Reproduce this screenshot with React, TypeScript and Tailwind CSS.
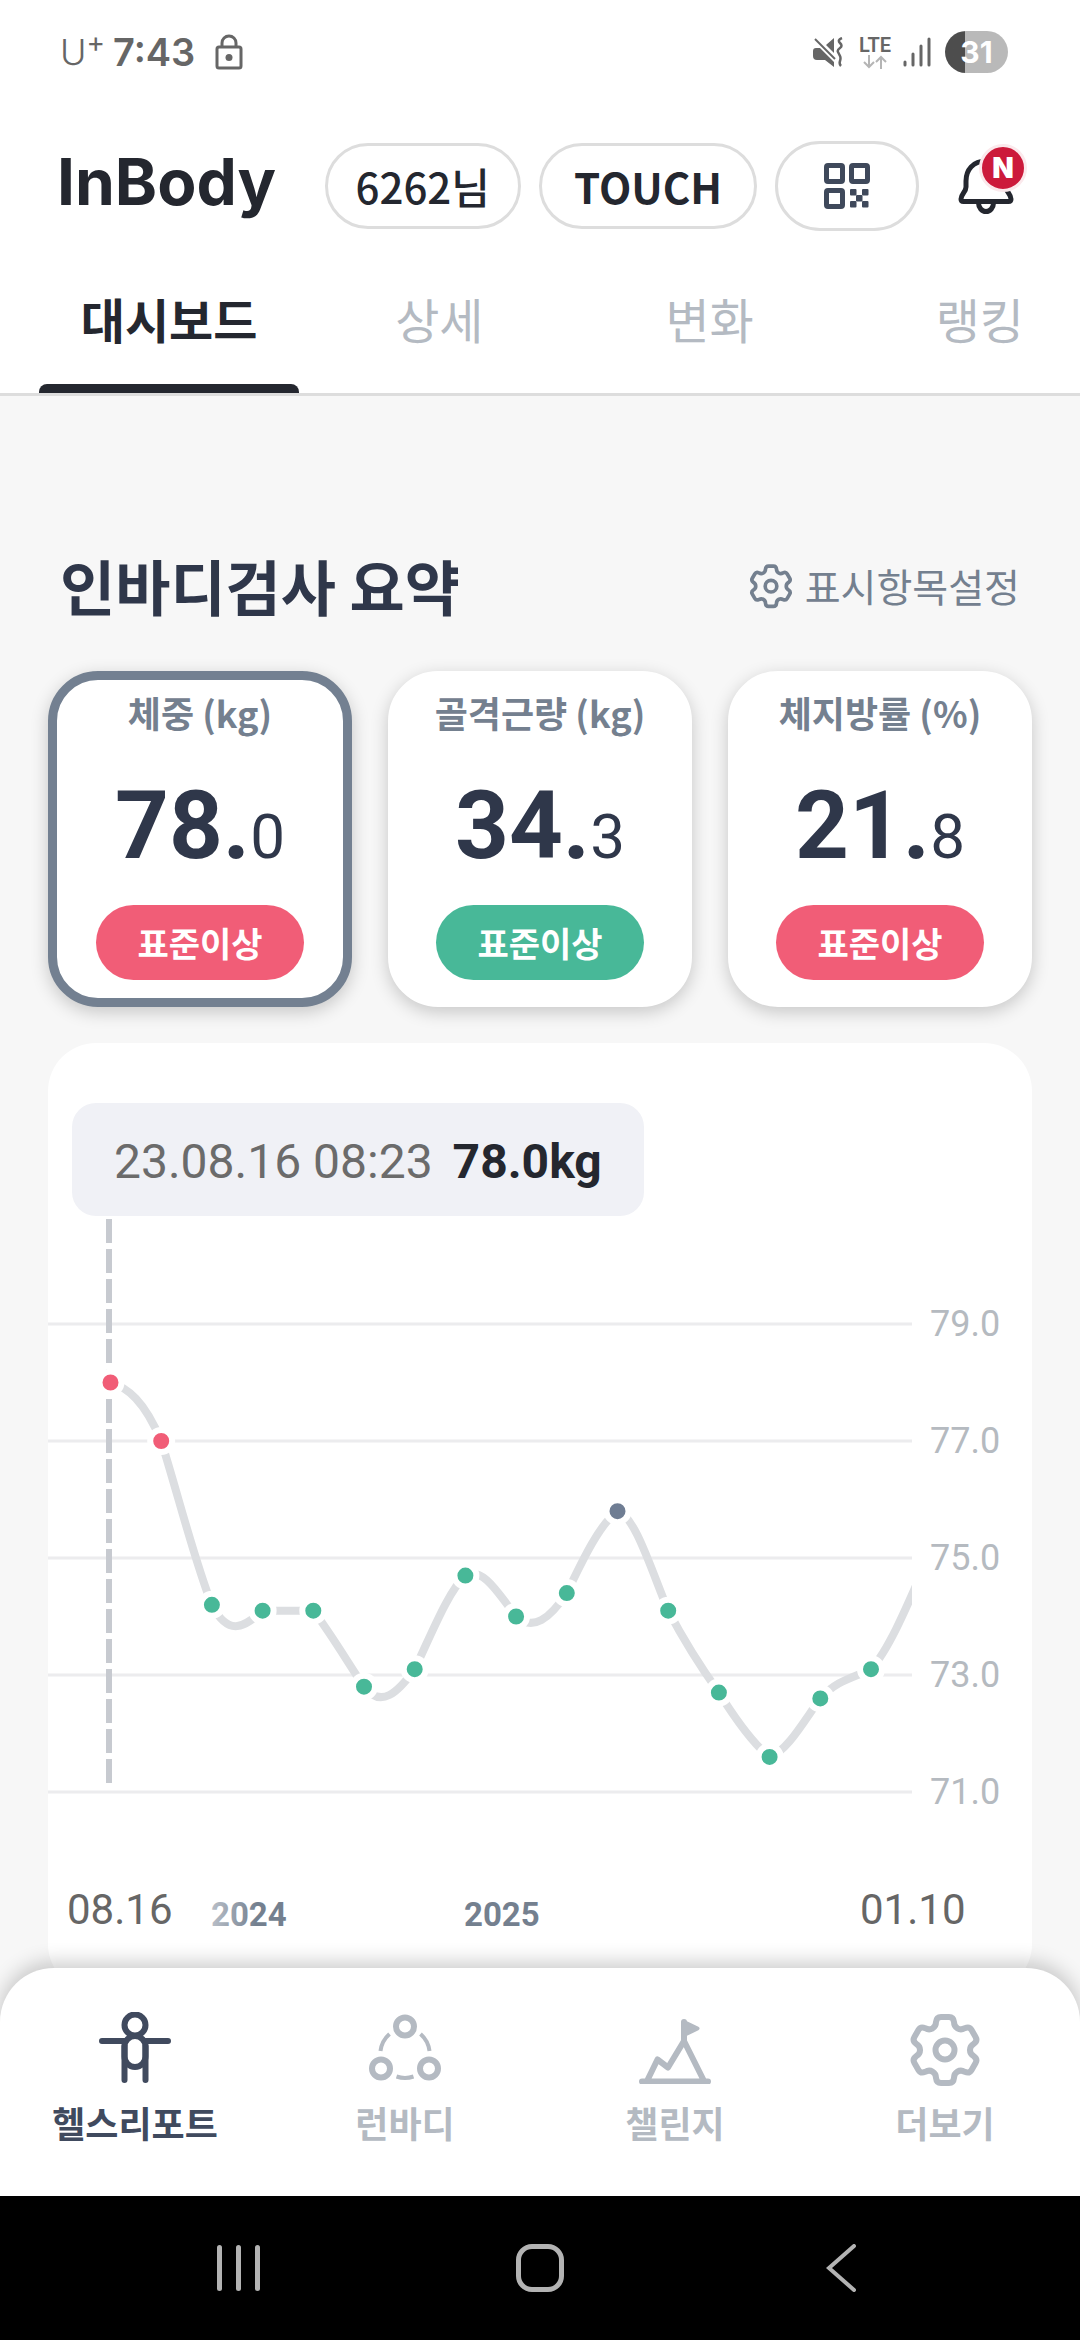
import { useState } from "react";
import clsx from "clsx";

type Metric = {
	id: string;
	label: string;
	whole: string;
	decimal: string;
	status: string;
	level: "over" | "good";
};

type Measurement = {
	value: number;
	color: string;
	// slope of the curve where it arrives at and leaves the point
	enter: number;
	leave: number;
};

const RED = "#f15d77";
const GREEN = "#48b898";
const SLATE = "#6f7d93";

const tabs = ["대시보드", "상세", "변화", "랭킹"];

const metrics: Metric[] = [
	{ id: "weight", label: "체중 (kg)", whole: "78.", decimal: "0", status: "표준이상", level: "over" },
	{ id: "muscle", label: "골격근량 (kg)", whole: "34.", decimal: "3", status: "표준이상", level: "good" },
	{ id: "fat", label: "체지방률 (%)", whole: "21.", decimal: "8", status: "표준이상", level: "over" },
];

const history: Measurement[] = [
	{ value: 78.0, color: RED, enter: 0, leave: 0.3 },
	{ value: 77.0, color: RED, enter: 2.4, leave: 3.2 },
	{ value: 74.2, color: GREEN, enter: 2.5, leave: 2 },
	{ value: 74.1, color: GREEN, enter: -0.9, leave: 0 },
	{ value: 74.1, color: GREEN, enter: 0, leave: 1.3 },
	{ value: 72.8, color: GREEN, enter: 1.5, leave: 1.3 },
	{ value: 73.1, color: GREEN, enter: -1.4, leave: -2.1 },
	{ value: 74.7, color: GREEN, enter: -0.9, leave: -0.6 },
	{ value: 74.0, color: GREEN, enter: 1.3, leave: 0.9 },
	{ value: 74.4, color: GREEN, enter: -1.5, leave: -2.1 },
	{ value: 75.8, color: SLATE, enter: -0.7, leave: 0.2 },
	{ value: 74.1, color: GREEN, enter: 2.4, leave: 1.9 },
	{ value: 72.7, color: GREEN, enter: 1.4, leave: 1.6 },
	{ value: 71.6, color: GREEN, enter: 0.8, leave: -0.3 },
	{ value: 72.6, color: GREEN, enter: -1.4, leave: -1.1 },
	{ value: 73.1, color: GREEN, enter: -0.5, leave: -1.1 },
	{ value: 74.75, color: GREEN, enter: -2.3, leave: 0 },
];

const gridValues = [79, 77, 75, 73, 71];

const PLOT_WIDTH = 864;
const STEP = 50.7;

const toX = (index: number) => 62.5 + index * STEP;
const toY = (value: number) => 108 + (79 - value) * 58.5;

const buildCurve = (data: Measurement[]) => {
	const handle = STEP / 3;
	let d = `M${toX(0)} ${toY(data[0].value)}`;
	for (let i = 1; i < data.length; i++) {
		const x0 = toX(i - 1);
		const y0 = toY(data[i - 1].value);
		const x1 = toX(i);
		const y1 = toY(data[i].value);
		d += ` C${x0 + handle} ${y0 + handle * data[i - 1].leave}`;
		d += ` ${x1 - handle} ${y1 - handle * data[i].enter} ${x1} ${y1}`;
	}
	return d;
};

// one tooth of the gear, repeated six times around the center
const buildGear = () => {
	const spin = (x: number, y: number, k: number) => {
		const a = (k * Math.PI) / 3;
		const px = x * Math.cos(a) + y * Math.sin(a);
		const py = x * Math.sin(a) - y * Math.cos(a);
		return `${px.toFixed(2)} ${py.toFixed(2)}`;
	};
	let d = `M${spin(-12.5, 21.6, 0)}`;
	for (let k = 0; k < 6; k++) {
		d += ` C${spin(-9.9, 23.1, k)} ${spin(-9, 25.5, k)} ${spin(-9, 28, k)}`;
		d += ` Q${spin(-8.5, 33, k)} ${spin(-4, 33, k)} L${spin(4, 33, k)}`;
		d += ` Q${spin(8.5, 33, k)} ${spin(9, 28, k)}`;
		d += ` C${spin(9, 25.5, k)} ${spin(9.9, 23.1, k)} ${spin(12.5, 21.6, k)}`;
	}
	return d + "Z";
};

const GearIcon = ({ className }: { className: string }) => (
	<svg viewBox="-36 -38 72 72" className={clsx("overflow-visible", className)} fill="none" stroke="currentColor" strokeWidth="6" aria-hidden="true">
		<path d={buildGear()} strokeLinejoin="round" />
		<circle r="9.5" />
	</svg>
);

const PersonIcon = () => (
	<svg viewBox="0 0 72 72" className="size-[72px]" fill="none" stroke="currentColor" strokeWidth="6" strokeLinecap="round" aria-hidden="true">
		<circle cx="36" cy="13" r="10.5" />
		<rect x="25.5" y="24" width="21" height="31" rx="10.5" />
		<path d="M3 29h23M46 29h23M25.5 34v34M46.5 34v34" />
	</svg>
);

const GroupIcon = () => (
	<svg viewBox="0 0 72 72" className="size-[72px]" fill="none" stroke="currentColor" aria-hidden="true">
		<g strokeWidth="6">
			<circle cx="36" cy="14.5" r="9" />
			<circle cx="12" cy="56.5" r="9" />
			<circle cx="60" cy="56.5" r="9" />
		</g>
		<path d="M20.5 22A27 27 0 0 0 11.5 39M51.5 22A27 27 0 0 1 60.5 39M27.5 64.5A27 27 0 0 0 44.5 64.5" strokeWidth="4" />
	</svg>
);

const MountainIcon = () => (
	<svg viewBox="0 0 72 72" className="size-[72px]" fill="none" stroke="currentColor" strokeWidth="6" strokeLinecap="round" strokeLinejoin="round" aria-hidden="true">
		<path d="M3 69.5h66M9 67l9.5-19.5L29 55.5L45 29l19 38M45 29V10" />
		<path d="M45 10l13.5 6.500L45 23z" fill="currentColor" strokeWidth="4" />
	</svg>
);

const QrIcon = () => (
	<svg viewBox="0 0 46 46" className="size-[46px]" fill="none" stroke="#3f495b" strokeWidth="5" aria-hidden="true">
		<rect x="2.5" y="2.5" width="16" height="16" rx="1.5" />
		<rect x="27.5" y="2.5" width="16" height="16" rx="1.5" />
		<rect x="2.5" y="27.5" width="16" height="16" rx="1.5" />
		<g fill="#3f495b" stroke="none">
			<rect x="26" y="26" width="6.5" height="6.5" rx="1" />
			<rect x="38" y="26" width="6.5" height="6.5" rx="1" />
			<rect x="32" y="32" width="6.5" height="6.5" rx="1" />
			<rect x="26" y="38" width="6.5" height="6.5" rx="1" />
			<rect x="38" y="38" width="6.5" height="6.5" rx="1" />
		</g>
	</svg>
);

const BellIcon = () => (
	<svg viewBox="0 0 58 60" className="h-[60px] w-[58px]" fill="none" stroke="#24272f" strokeWidth="5" strokeLinejoin="round" aria-hidden="true">
		<path d="M29 5C16 5 9 14 9 25v6c0 5-5 7-5 12 0 1.500 1 2.500 2.500 2.500h45c1.500 0 2.500-1 2.500-2.500 0-5-5-7-5-12v-6C49 14 42 5 29 5z" />
		<path d="M21.500 47a7.500 8.500 0 0 0 15 0" />
	</svg>
);

const StatusBar = () => (
	<div className="flex h-[104px] items-center justify-between pl-[60px] pr-[72px] text-[#666]">
		<div className="flex items-center">
			<span className="font-[Inter] text-[36px] font-light leading-none">U</span>
			<span className="mb-5 font-[Inter] text-[28px] leading-none">+</span>
			<span className="ml-2 font-[Inter] text-[38px] font-semibold leading-none">7:43</span>
			<svg viewBox="0 0 28 36" className="ml-5 h-9 w-7" fill="none" stroke="currentColor" strokeWidth="3" aria-hidden="true">
				<rect x="2" y="13" width="24" height="21" rx="2" />
				<path d="M7 13V9a7 7 0 0 1 14 0v4" />
				<circle cx="14" cy="23.500" r="3.500" fill="currentColor" stroke="none" />
			</svg>
		</div>
		<div className="flex items-center">
			<svg viewBox="0 0 30 30" className="size-[30px]" aria-hidden="true">
				<path d="M0 14q0-3 3-3h4l14 14v5l-9-7H4q-4 0-4-4zM13 8l8-7v15z" fill="currentColor" />
				<path d="M2 2l20 20" stroke="currentColor" strokeWidth="2" />
				<path d="M29 1q-5 2-2 5t0 5-2 4 2 4 0 5 1 5" fill="none" stroke="currentColor" strokeWidth="2.500" />
			</svg>
			<div className="ml-4 flex flex-col items-center">
				<span className="font-[Roboto] text-[20px] font-semibold leading-none">LTE</span>
				<svg viewBox="0 0 24 14" className="h-[14px] w-6" fill="none" stroke="#b5b5b5" strokeWidth="2" aria-hidden="true">
					<path d="M6 0v12M1 7l5 5 5-5M18 14V2M13 7l5-5 5 5" />
				</svg>
			</div>
			<svg viewBox="0 0 28 30" className="ml-3 h-[30px] w-7" stroke="currentColor" strokeWidth="3" strokeLinecap="round" aria-hidden="true">
				<path d="M2 25v3M10 17v11M18 9v19M26 2v26" />
			</svg>
			<div className="ml-[14px] flex h-[42px] w-[63px] items-center justify-center rounded-full bg-linear-to-r from-[#4d4d4d] from-31% to-[#b9b9b9] to-31% font-[Inter] text-[30px] font-bold text-white">
				31
			</div>
		</div>
	</div>
);

const TopBar = () => (
	<div className="flex h-[164px] items-center gap-[18px] pl-[57px] pr-[65px] text-[#24272f]">
		<a href="#home" className="mb-2 flex-1 font-[Inter] text-[64px] font-bold">InBody</a>
		<button className="h-[86px] rounded-full border-3 border-[#ddd] px-7 text-[42px] font-medium leading-none">6262님</button>
		<button className="h-[86px] rounded-full border-3 border-[#ddd] px-8 text-[42px] font-bold leading-none">TOUCH</button>
		<button aria-label="QR" className="flex h-[90px] w-36 items-center justify-center rounded-full border-3 border-[#ddd]">
			<QrIcon />
		</button>
		<button aria-label="알림" className="relative ml-5">
			<BellIcon />
			<span className="absolute -right-3 -top-3 flex size-12 items-center justify-center rounded-full border-3 border-[#fbe9ec] bg-[#cc1a3b] font-[Inter] text-[28px] font-black leading-none text-white">
				N
			</span>
		</button>
	</div>
);

const TabBar = () => {
	const [active, setActive] = useState(tabs[0]);

	return (
		<nav className="flex gap-[10px] overflow-hidden border-b-3 border-[#ddd] pl-[39px]">
			{tabs.map((tab) => (
				<button
					key={tab}
					onClick={() => setActive(tab)}
					className={clsx(
						"flex w-1/4 shrink-0 flex-col items-center pt-[14px] text-[48px] leading-[72px]",
						tab === active ? "font-bold text-[#24272f]" : "text-[#b4bac2]"
					)}
				>
					{tab}
					<span className={clsx("mt-[30px] h-[9px] w-full rounded-t-lg", tab === active && "bg-[#24272f]")} />
				</button>
			))}
		</nav>
	);
};

type MetricCardProps = {
	metric: Metric;
	selected: boolean;
	onSelect: () => void;
};

const MetricCard = ({ metric, selected, onSelect }: MetricCardProps) => (
	<button
		onClick={onSelect}
		className={clsx(
			"flex flex-col items-center rounded-[50px] border-9 bg-white pb-[18px] pt-[6px] shadow-[0_5px_18px_rgba(0,0,0,0.2)]",
			selected ? "border-[#738091]" : "border-white"
		)}
	>
		<span className="text-[36px] font-bold leading-[52px] text-[#74808f]">{metric.label}</span>
		<span className="mt-10 font-[Roboto] text-[94px] font-bold leading-[96px] text-[#2f374a]">
			{metric.whole}
			<span className="text-[62px] font-normal leading-none">{metric.decimal}</span>
		</span>
		<span
			className={clsx(
				"mt-[31px] flex h-[75px] w-52 items-center justify-center rounded-full text-[34px] font-bold leading-none text-white",
				metric.level === "over" ? "bg-[#f15d77]" : "bg-[#48b898]"
			)}
		>
			{metric.status}
		</span>
	</button>
);

const WeightChart = () => (
	<svg viewBox="0 0 984 776" className="w-full font-[Roboto]" role="img" aria-label="체중 변화">
		<defs>
			<clipPath id="plot">
				<rect width={PLOT_WIDTH} height="640" />
			</clipPath>
			<linearGradient id="fade">
				<stop offset="0" stopColor="#b9bfc8" />
				<stop offset="0.6" stopColor="#74808f" />
			</linearGradient>
		</defs>

		{gridValues.map((value) => (
			<g key={value}>
				<line x1="0" x2={PLOT_WIDTH} y1={toY(value)} y2={toY(value)} stroke="#ececee" strokeWidth="3" />
				<text x="882" y={toY(value) + 12} fontSize="36" fill="#b5bac0">{value.toFixed(1)}</text>
			</g>
		))}

		<line x1="61" x2="61" y1="3" y2="567" stroke="#c7cad0" strokeWidth="6" strokeDasharray="24 6" />

		<g clipPath="url(#plot)">
			<path d={buildCurve(history)} fill="none" stroke="#dcdee1" strokeWidth="8" />
			{history.map((item, i) => (
				<circle key={i} cx={toX(i)} cy={toY(item.value)} r="11" fill={item.color} stroke="#fff" strokeWidth="6" />
			))}
		</g>

		<text x="19" y="708" fontSize="42" fill="#666">08.16</text>
		<text x="163" y="710" fontSize="33" fontWeight="700" fill="url(#fade)">2024</text>
		<text x="416" y="710" fontSize="33" fontWeight="700" fill="#74808f">2025</text>
		<text x="812" y="708" fontSize="42" fill="#666">01.10</text>
	</svg>
);

const menu = [
	{ label: "헬스리포트", icon: <PersonIcon />, active: true },
	{ label: "런바디", icon: <GroupIcon />, active: false },
	{ label: "챌린지", icon: <MountainIcon />, active: false },
	{ label: "더보기", icon: <GearIcon className="size-[72px]" />, active: false },
];

const BottomMenu = () => (
	<nav className="grid grid-cols-4 rounded-t-[54px] bg-white pb-[47px] pt-11 shadow-[0_-6px_20px_rgba(0,0,0,0.2)]">
		{menu.map((item) => (
			<a
				key={item.label}
				href={`#${item.label}`}
				className={clsx(
					"flex flex-col items-center gap-[11px] text-[36px] font-bold leading-[54px]",
					item.active ? "text-[#404a5e]" : "text-[#b4bac2]"
				)}
			>
				{item.icon}
				{item.label}
			</a>
		))}
	</nav>
);

const SystemBar = () => (
	<div className="grid h-36 grid-cols-3 items-center bg-black px-[88px] text-[#b3b3b3]">
		<button aria-label="최근 앱" className="flex justify-center gap-[14px]">
			<span className="h-[46px] w-[5px] rounded-full bg-current" />
			<span className="h-[46px] w-[5px] rounded-full bg-current" />
			<span className="h-[46px] w-[5px] rounded-full bg-current" />
		</button>
		<button aria-label="홈" className="size-12 justify-self-center rounded-[16px] border-5 border-current" />
		<button aria-label="뒤로" className="flex justify-center">
			<svg viewBox="0 0 30 48" className="h-12 w-[30px]" fill="none" stroke="currentColor" strokeWidth="4" strokeLinecap="round" aria-hidden="true">
				<path d="M28 2L3 24l25 22" />
			</svg>
		</button>
	</div>
);

export default function App() {
	const [selected, setSelected] = useState("weight");

	return (
		<div className="flex min-h-screen flex-col bg-[#f7f7f7] font-['Noto_Sans_CJK_KR',sans-serif]">
			<header className="bg-white">
				<StatusBar />
				<TopBar />
				<TabBar />
			</header>

			<main className="-mb-6 flex-1 px-12 pt-[147px]">
				<div className="flex items-center justify-between px-3">
					<h1 className="text-[60px] font-bold leading-[84px] text-[#2f374a]">인바디검사 요약</h1>
					<button className="flex items-center gap-3 text-[39px] leading-none text-[#74808f]">
						<GearIcon className="size-11" />
						표시항목설정
					</button>
				</div>

				<div className="mt-11 grid grid-cols-3 gap-9">
					{metrics.map((metric) => (
						<MetricCard
							key={metric.id}
							metric={metric}
							selected={metric.id === selected}
							onSelect={() => setSelected(metric.id)}
						/>
					))}
				</div>

				<section className="mt-9 overflow-hidden rounded-[48px] bg-white pt-[60px]">
					<div className="ml-6 flex h-[113px] w-fit items-center gap-5 rounded-3xl bg-[#f0f1f6] px-[42px] pt-1 font-[Roboto] text-[48px] leading-none">
						<span className="text-[#6b6b6b]">23.08.16 08:23</span>
						<strong className="text-[#24272f]">78.0kg</strong>
					</div>
					<WeightChart />
				</section>
			</main>

			<footer className="sticky bottom-0 z-10">
				<BottomMenu />
				<SystemBar />
			</footer>
		</div>
	);
}
